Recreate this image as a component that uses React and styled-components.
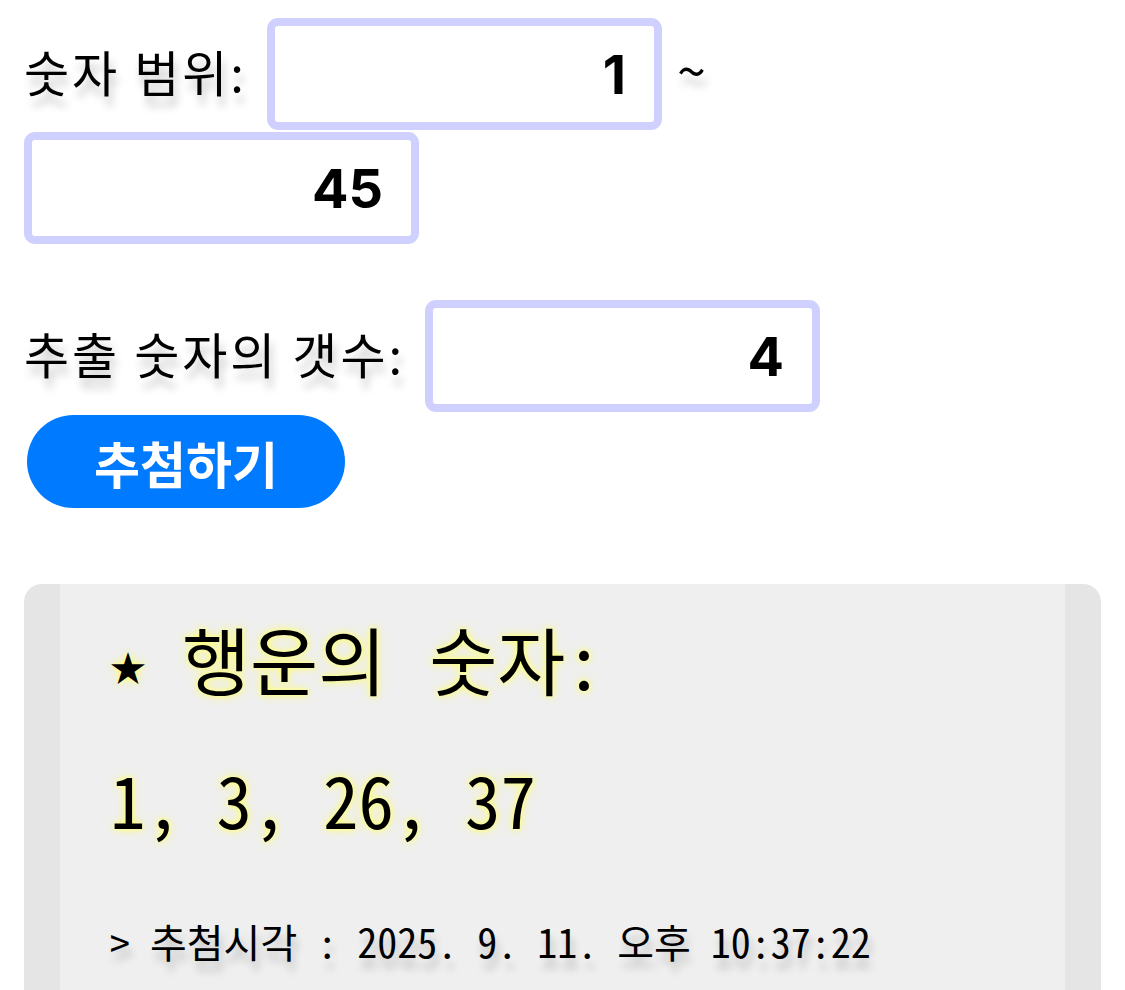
import React from "react";
import styled, { createGlobalStyle } from "styled-components";

const Global = createGlobalStyle`
  html, body { margin: 0; padding: 0; background: #ffffff; }
  body { font-family: "Noto Sans CJK KR", "Noto Sans", sans-serif; color: #000; }
`;

const Page = styled.main`
  padding: 18px 24px 0 24px;
  display: flex;
  flex-direction: column;
`;

const Row = styled.div`
  display: flex;
  flex-wrap: wrap;
  align-items: center;
  column-gap: ${(p) => p.$gap || 20}px;
  row-gap: 2px;
  margin-top: ${(p) => p.$top || 0}px;
`;

const Label = styled.span`
  font-size: 49px;
  letter-spacing: 3px;
  line-height: 60px;
  margin-bottom: 6px;
  text-shadow: 3px 10px 8px rgba(0, 0, 0, 0.22);
  white-space: nowrap;
`;

const Tilde = styled(Label)`
  margin-left: -5px;
  margin-bottom: 10px;
  font-size: 52px;
`;

const NumberInput = styled.input`
  box-sizing: border-box;
  width: 395px;
  height: 112px;
  border: 8px solid #d0d0ff;
  border-radius: 11px;
  background: #fff;
  padding: 0 28px 0 12px;
  text-align: right;
  font-family: Inter, "Liberation Sans", sans-serif;
  font-weight: 700;
  font-size: 54px;
  color: #000;
  outline: none;
`;

const DrawButton = styled.button`
  align-self: flex-start;
  margin: 3px 0 0 3px;
  width: 318px;
  height: 93px;
  border: none;
  border-radius: 47px;
  background: #007aff;
  color: #fff;
  font-family: "Noto Sans CJK KR", sans-serif;
  font-weight: 700;
  font-size: 50px;
  line-height: 1;
  cursor: pointer;
`;

const ResultBox = styled.section`
  box-sizing: border-box;
  margin-top: 76px;
  background: #efefef;
  border-left: 36px solid #e5e5e5;
  border-right: 36px solid #e5e5e5;
  border-radius: 18px 18px 0 0;
  padding: 34px 48px 30px 50px;
  min-height: 406px;
  font-family: "Noto Sans Mono CJK KR", "DejaVu Sans Mono", monospace;
  display: flex;
  flex-direction: column;
`;

const Glow = `text-shadow: 0 0 10px #ffff66, 0 0 4px #ffff99;`;

const Heading = styled.h2`
  margin: 0;
  font-weight: 400;
  font-size: 71px;
  line-height: 80px;
  ${Glow}
`;

const Star = styled.span`
  display: inline-block;
  width: 72px;
  font-size: 36px;
  vertical-align: 8px;
`;

const HeadingText = styled.span`
  font-size: 74px;
  word-spacing: 6px;
`;

const Numbers = styled.div`
  margin-top: 52px;
  font-size: 71px;
  line-height: 80px;
  ${Glow}
`;

const Stamp = styled.div`
  margin-top: 78px;
  font-size: 40px;
  line-height: 50px;
  white-space: pre;
  text-shadow: 3px 10px 8px rgba(0, 0, 0, 0.2);
`;

export default function App() {
  return (
    <>
      <Global />
      <Page>
        <Row $gap={20}>
          <Label>숫자 범위:</Label>
          <NumberInput type="text" defaultValue="1" />
          <Tilde>~</Tilde>
          <NumberInput type="text" defaultValue="45" />
        </Row>
        <Row $top={56} $gap={20}>
          <Label>추출 숫자의 갯수:</Label>
          <NumberInput type="text" defaultValue="4" />
        </Row>
        <DrawButton>추첨하기</DrawButton>
        <ResultBox>
          <Heading>
            <Star>★</Star>
            <HeadingText>행운의 숫자:</HeadingText>
          </Heading>
          <Numbers>1, 3, 26, 37</Numbers>
          <Stamp>{"> 추첨시각 : 2025. 9. 11. 오후 10:37:22"}</Stamp>
        </ResultBox>
      </Page>
    </>
  );
}
